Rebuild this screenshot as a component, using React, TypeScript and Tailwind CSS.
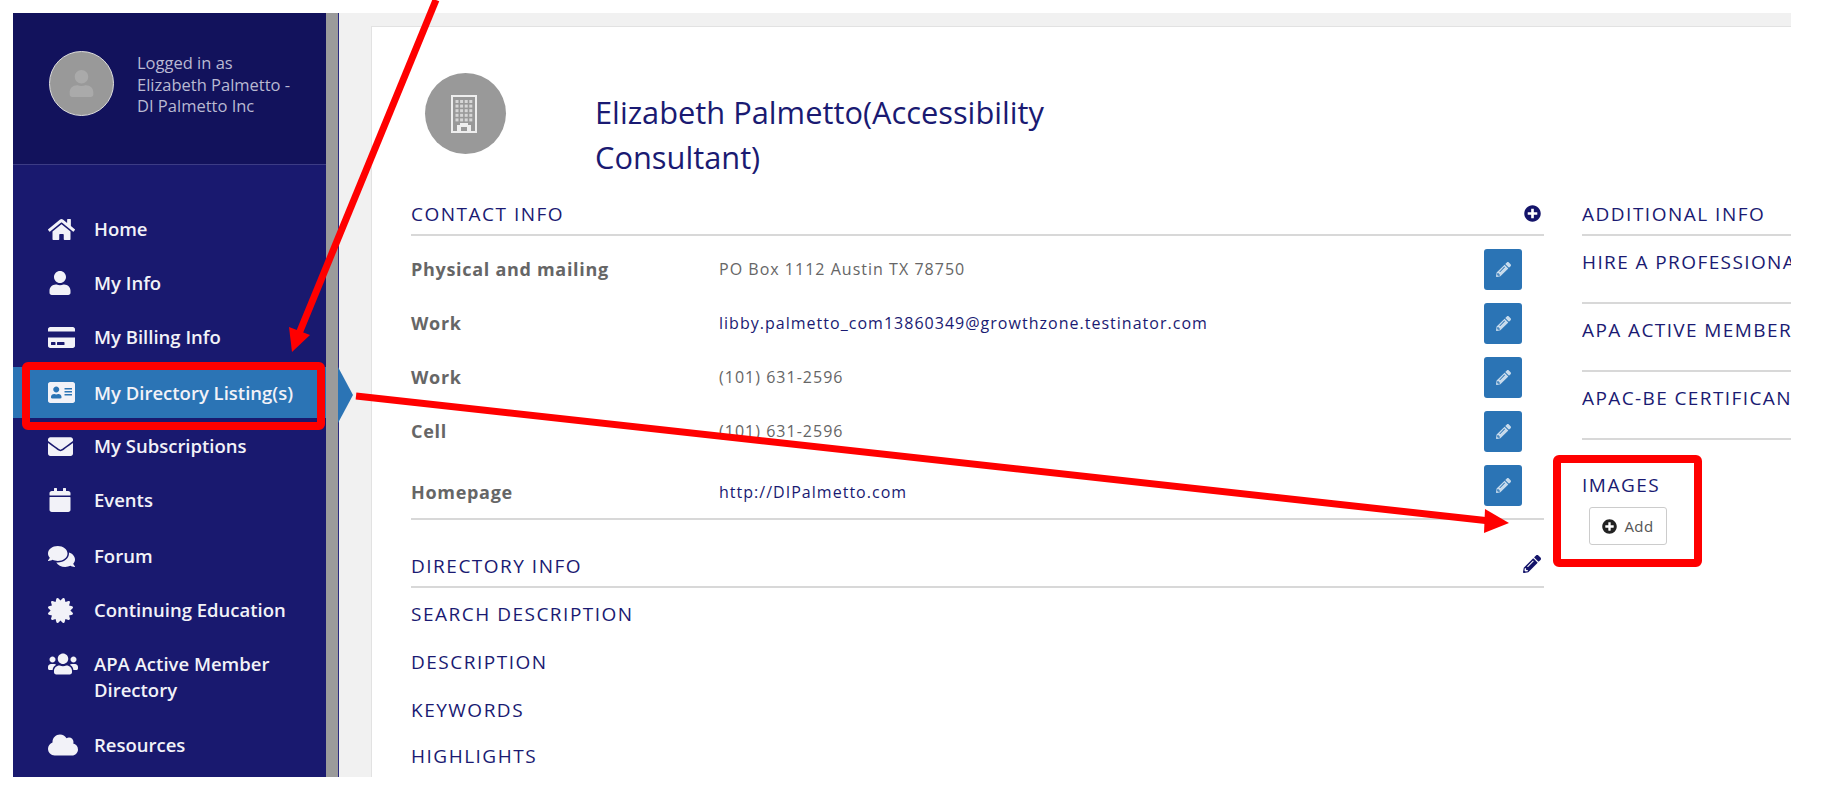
import { FaAddressCard, FaCalendar, FaCertificate, FaCloud, FaComments, FaCreditCard, FaEnvelope, FaHome, FaPencilAlt, FaPlusCircle, FaUser, FaUsers } from 'react-icons/fa'
import type { ReactNode } from 'react'

const FONT = "font-['Open_Sans',sans-serif]"

function Building() {
  const windows = []
  for (let r = 0; r < 5; r++) {
    for (let c = 0; c < 4; c++) {
      windows.push(<rect key={`${r}-${c}`} x={4.5 + c * 4.6} y={5 + r * 4.6} width="3" height="3" fill="#d6d6d6" />)
    }
  }
  return (
    <svg className="mr-[4px]" width="26" height="38" viewBox="0 0 26 38">
      <rect x="1" y="1" width="24" height="36" fill="#999" stroke="#eee" strokeWidth="2" />
      {windows}
      <path d="M6 37v-7h3v-2h8v2h3v7h-4v-5h-6v5z" fill="#eee" />
    </svg>
  )
}

function NavItem({ icon, label, className }: { icon: ReactNode; label: ReactNode; className: string }) {
  return (
    <div className={`flex pl-[35px] text-[18.5px] font-semibold leading-[26px] text-[#f2f2f8] ${className}`}>
      <span className="flex h-[26px] w-[46px] shrink-0 items-center text-[27px]">{icon}</span>
      <span>{label}</span>
    </div>
  )
}

function Heading({ children, right }: { children: ReactNode; right?: ReactNode }) {
  return (
    <div className="flex h-[34px] items-start justify-between border-b-2 border-[#d8d8d8] pr-[1px]">
      <span className="text-[19px] leading-[24px] tracking-[1.5px] text-[#1a1a72] whitespace-nowrap">{children}</span>
      {right}
    </div>
  )
}

function ContactRow({ label, value, link, low }: { label: string; value: string; link?: boolean; low?: boolean }) {
  return (
    <div className="flex h-[54px] items-center">
      <span className={`w-[308px] text-[18px] font-bold tracking-[0.7px] text-[#666] ${low ? 'pt-[14px]' : ''}`}>{label}</span>
      <span className={`flex-1 text-[16px] tracking-[1.02px] ${link ? 'text-[#1a1a72]' : 'text-[#666]'} ${low ? 'pt-[14px]' : ''}`}>{value}</span>
      <button className="mr-[22px] flex h-[41px] w-[38px] items-center justify-center rounded-[3px] bg-[#2b74b5] text-[15px] text-[#c8dbec]">
        <FaPencilAlt />
      </button>
    </div>
  )
}

function InfoRow({ children }: { children: ReactNode }) {
  return (
    <div className="h-[68px] overflow-hidden border-b-2 border-[#d8d8d8] pt-[14px] text-[19px] leading-[24px] tracking-[1.4px] whitespace-nowrap text-[#1a1a72]">
      {children}
    </div>
  )
}

export default function App() {
  return (
    <div className={`relative flex h-[806px] w-[1822px] overflow-hidden bg-white px-[13px] pt-[13px] pb-[29px] pr-[31px] ${FONT}`}>
      {/* sidebar */}
      <aside className="flex w-[313px] shrink-0 flex-col overflow-hidden bg-[#19196f]">
        <div className="flex h-[152px] shrink-0 items-start gap-[23px] border-b border-[#3c3c85] bg-[#12125c] pt-[38px] pl-[36px]">
          <div className="flex h-[65px] w-[65px] shrink-0 items-center justify-center rounded-full border border-[#ddd] bg-[#999]">
            <FaUser className="text-[27px] text-[#aaa]" />
          </div>
          <p className="mt-[1px] text-[16.5px] leading-[21.5px] text-[#b9b9d2]">Logged in as<br />Elizabeth Palmetto -<br />DI Palmetto Inc</p>
        </div>
        <nav className="pt-[37px]">
          <NavItem className="h-[54px] items-center" icon={<FaHome />} label="Home" />
          <NavItem className="h-[54px] items-center" icon={<FaUser className="text-[24px]" />} label="My Info" />
          <NavItem className="h-[54px] items-center" icon={<FaCreditCard />} label="My Billing Info" />
          <NavItem className="mt-[3px] h-[51px] items-center bg-[#2b74b5]" icon={<FaAddressCard />} label="My Directory Listing(s)" />
          <NavItem className="mt-[1px] h-[54px] items-center" icon={<FaEnvelope className="text-[25px]" />} label="My Subscriptions" />
          <NavItem className="h-[54px] items-center" icon={<FaCalendar className="text-[24px]" />} label="Events" />
          <NavItem className="mt-[2px] h-[54px] items-center" icon={<FaComments />} label="Forum" />
          <NavItem className="h-[54px] items-center" icon={<FaCertificate className="text-[25px]" />} label="Continuing Education" />
          <NavItem className="pt-[14px]" icon={<FaUsers className="text-[30px]" />} label={<>APA Active Member<br />Directory</>} />
          <NavItem className="mt-[29px] items-center" icon={<FaCloud className="text-[30px]" />} label="Resources" />
        </nav>
      </aside>

      {/* scroll strip */}
      <div className="w-[12px] shrink-0 bg-[#9b9b9b]" />
      <div className="w-[1px] shrink-0 bg-[#2a2a80]" />

      {/* content */}
      <main className="min-w-0 flex-1 bg-[#f1f1f1] pt-[13px] pl-[32px]">
        <div className="h-full overflow-hidden border-t border-l border-[#e2e2e2] bg-white pt-[46px] pl-[39px]">
          <div className="flex h-[129px] items-start pl-[14px]">
            <div className="flex h-[81px] w-[81px] shrink-0 items-center justify-center rounded-full bg-[#999]">
              <Building />
            </div>
            <h1 className="mt-[17px] ml-[89px] w-[520px] text-[30.8px] leading-[45px] text-[#1a1a72]">Elizabeth Palmetto(Accessibility Consultant)</h1>
          </div>

          <div className="flex gap-[38px]">
            <div className="w-[1133px] shrink-0">
              <Heading right={<FaPlusCircle className="mt-[3px] mr-[2px] text-[17px] text-[#14146a]" />}>CONTACT INFO</Heading>
              <div className="border-b-2 border-[#d8d8d8] pt-[6px] pb-[6px]">
                <ContactRow label="Physical and mailing" value="PO Box 1112 Austin TX 78750" />
                <ContactRow label="Work" value="libby.palmetto_com13860349@growthzone.testinator.com" link />
                <ContactRow label="Work" value="(101) 631-2596" />
                <ContactRow label="Cell" value="(101) 631-2596" />
                <ContactRow label="Homepage" value="http://DIPalmetto.com" link low />
              </div>
              <div className="mt-[34px]">
                <Heading right={<FaPencilAlt className="mt-[1px] mr-[2px] text-[18px] text-[#14146a]" />}>DIRECTORY INFO</Heading>
              </div>
              <div className="flex flex-col pt-[2px] text-[19px] tracking-[1.5px] text-[#1a1a72]">
                <span className="flex h-[48px] items-center">SEARCH DESCRIPTION</span>
                <span className="flex h-[48px] items-center">DESCRIPTION</span>
                <span className="flex h-[48px] items-center">KEYWORDS</span>
                <span className="-mt-[2px] flex h-[48px] items-center">HIGHLIGHTS</span>
              </div>
            </div>

            <div className="min-w-0 flex-1">
              <Heading>ADDITIONAL INFO</Heading>
              <InfoRow>HIRE A PROFESSIONAL</InfoRow>
              <InfoRow>APA ACTIVE MEMBER</InfoRow>
              <InfoRow>APAC-BE CERTIFICANT</InfoRow>
              <div className="mt-[33px] text-[19px] leading-[24px] tracking-[1.5px] text-[#1a1a72]">IMAGES</div>
              <button className="mt-[10px] ml-[7px] flex h-[38px] w-[78px] items-center justify-center gap-[7px] rounded-[3px] border border-[#ccc] bg-white text-[15px] tracking-[0.4px] text-[#555]">
                <FaPlusCircle className="text-[15px] text-[#222]" />
                Add
              </button>
            </div>
          </div>
        </div>
      </main>

      {/* annotations and the active-item pointer */}
      <svg className="pointer-events-none absolute inset-0" width="1822" height="806" viewBox="0 0 1822 806" fill="none">
        <path d="M338 367L353 395L338 423Z" fill="#2b74b5" />
        <rect x="26" y="366" width="295" height="60" rx="2" stroke="#ff0000" strokeWidth="8" />
        <rect x="1557" y="459" width="141" height="104" rx="2" stroke="#ff0000" strokeWidth="8" />
        <path d="M436 0L298 336" stroke="#ff0000" strokeWidth="7" />
        <path d="M292 352L289 327L310 335Z" fill="#ff0000" />
        <path d="M356 396L1490 521" stroke="#ff0000" strokeWidth="7" />
        <path d="M1509 523L1485 509L1484 533Z" fill="#ff0000" />
      </svg>
    </div>
  )
}
